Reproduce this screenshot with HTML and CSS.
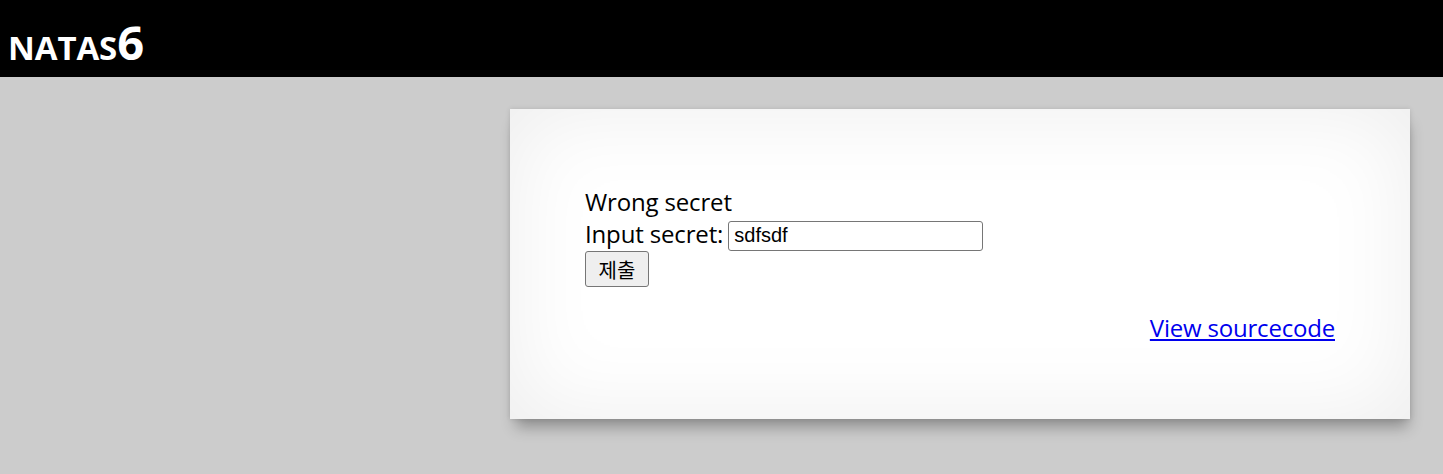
FILE: index.html
```html
<!DOCTYPE html>
<html>
<head>
<meta charset="utf-8">
<title>natas6</title>
<link rel="stylesheet" href="styles.css">
</head>
<body>
<h1 class="title">natas6</h1>
<div class="content">
  <div class="line">Wrong secret</div>
  <form class="form" method="post">
    <div class="line">Input secret: <input class="secret" name="secret" value="sdfsdf"></div>
    <button class="submit" type="submit">제출</button>
  </form>
  <div class="viewsource"><a class="srclink" href="#">View sourcecode</a></div>
</div>
</body>
</html>
```
FILE: styles.css
```css
html, body {
  margin: 0;
  padding: 0;
}
body {
  background: #cccccc;
  font-family: "Open Sans", "Noto Sans CJK KR", sans-serif;
  font-size: 24px;
  color: #000;
  height: 474px;
  overflow: hidden;
}
.title {
  margin: 0;
  background: #000;
  color: #fff;
  font-family: "Open Sans", "Noto Sans CJK KR", sans-serif;
  font-variant: small-caps;
  font-weight: 700;
  font-size: 47px;
  line-height: 77px;
  height: 73px;
  padding: 4px 8px 0 8px;
  letter-spacing: -0.1px;
}
.content {
  width: 750px;
  margin: 32px 0 0 510px;
  padding: 77px 75px 75px 75px;
  background: #fff;
  box-shadow: inset 0 0 90px rgba(0,0,0,0.075), 0 0 5px rgba(0,0,0,0.12), 2px 12px 14px -4px rgba(0,0,0,0.3);
}
.line {
  line-height: 32px;
  height: 32px;
  white-space: nowrap;
  letter-spacing: -0.15px;
}
.form {
  margin: 0 0 24px 0;
}
.secret {
  font-family: "Liberation Sans", Arial, sans-serif;
  font-size: 20px;
  width: 255px;
  height: 30px;
  box-sizing: border-box;
  border: 1px solid #767676;
  border-radius: 3px;
  padding: 1px 5px;
  vertical-align: 1px;
  margin: 0 0 0 -1px;
  letter-spacing: 0;
}
.submit {
  font-family: "Noto Sans CJK KR", sans-serif;
  font-size: 20px;
  width: 64px;
  height: 36px;
  box-sizing: border-box;
  border: 1px solid #767676;
  border-radius: 3px;
  background: #efefef;
  color: #000;
  padding: 0;
  margin: 1px 0 0 0;
  display: block;
}
.viewsource {
  text-align: right;
  line-height: 32px;
  letter-spacing: -0.2px;
  padding-top: 1px;
}
.srclink {
  color: #0000ee;
}
```
